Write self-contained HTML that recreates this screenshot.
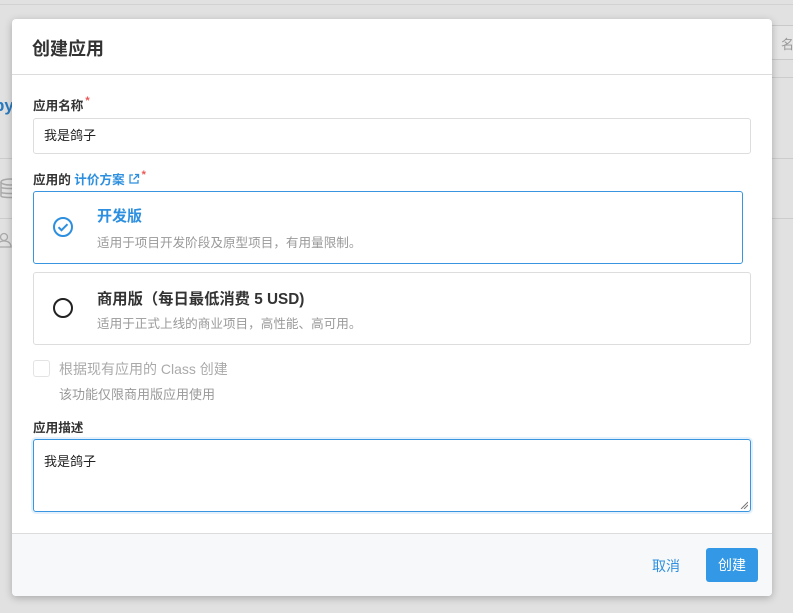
<!DOCTYPE html>
<html><head><meta charset="utf-8"><style>
*{box-sizing:border-box;margin:0;padding:0}
body{width:793px;height:613px;background:#e1e1e1;font-family:"Liberation Sans","Noto Sans CJK SC",sans-serif;position:relative;overflow:hidden;color:#333}
.abs{position:absolute}
.modal{left:12px;top:19px;width:760px;height:577px;background:#fff;border-radius:4px;box-shadow:0 2px 8px rgba(0,0,0,.25);overflow:hidden}
.hd{height:56px;border-bottom:1px solid #dcdcdc;padding:16px 20px;font-size:18px;font-weight:bold;color:#333}
.lbl{font-size:12.6px;font-weight:bold;color:#333}
.star{color:#e55;font-size:11px;vertical-align:top;margin-left:2px}
.inp{border:1px solid #ddd;border-radius:3px;font-size:13px;padding:0 10px;color:#222}
.card{border:1px solid #ddd;border-radius:3px}
.ft{left:0;top:514px;width:760px;height:63px;background:#f7f8fa;border-top:1px solid #dcdcdc}
</style></head><body>
<div class="abs" style="left:0;top:4px;width:793px;height:1px;background:#d2d2d2"></div>
<div class="abs" style="left:770px;top:25px;width:30px;height:35px;border:1px solid #c9c9c9;border-radius:3px;background:#e4e4e4;font-size:13px;color:#999;padding:8px 0 0 10px">名</div>
<div class="abs" style="left:0;top:96px;font-size:17px;font-weight:bold;color:#2a7ac0;margin-left:-6px">py</div>
<svg class="abs" style="left:0;top:178px" width="12" height="22"><ellipse cx="10" cy="4" rx="9" ry="3" fill="none" stroke="#aaa" stroke-width="1.5"/><path d="M1 4v14M1 9c0 2 18 2 18 0M1 14c0 2 18 2 18 0M1 18c0 2 18 2 18 0" fill="none" stroke="#aaa" stroke-width="1.5"/></svg>
<svg class="abs" style="left:0;top:232px" width="12" height="16"><circle cx="4" cy="5" r="3.5" fill="none" stroke="#aaa" stroke-width="1.3"/><path d="M-3 15c0-4 3-6 7-6s7 2 7 6z" fill="none" stroke="#aaa" stroke-width="1.3"/></svg>
<div class="abs" style="left:0;top:158px;width:12px;height:1px;background:#ccc"></div>
<div class="abs" style="left:0;top:218px;width:12px;height:1px;background:#ccc"></div>
<div class="abs" style="left:772px;top:77px;width:21px;height:1px;background:#ccc"></div>
<div class="abs" style="left:772px;top:158px;width:21px;height:1px;background:#ccc"></div>
<div class="abs" style="left:772px;top:218px;width:21px;height:1px;background:#ccc"></div>

<div class="abs modal">
<div class="hd">创建应用</div>
<div class="abs lbl" style="left:21px;top:76px">应用名称<span class="star">*</span></div>
<div class="abs inp" style="left:21px;top:99px;width:718px;height:36px;line-height:34px">我是鸽子</div>
<div class="abs lbl" style="left:21px;top:150px">应用的 <span style="color:#2d8fdf">计价方案</span><svg width="12" height="12" viewBox="0 0 12 12" style="margin-left:3px;vertical-align:-1px"><path d="M5 2H2v8h8V7M7 1.5h3.5V5M10.5 1.5L5.5 6.5" fill="none" stroke="#2d8fdf" stroke-width="1.3"/></svg><span class="star">*</span></div>
<div class="abs card" style="left:21px;top:172px;width:710px;height:73px;border-color:#3a95e0">
<svg class="abs" style="left:18px;top:24px" width="22" height="22" viewBox="0 0 22 22"><circle cx="11" cy="11" r="9" fill="none" stroke="#2d8fdf" stroke-width="2"/><path d="M6.5 11.2l3 3 6-6" fill="none" stroke="#2d8fdf" stroke-width="2"/></svg>
<div class="abs" style="left:63px;top:13px;font-size:15px;font-weight:bold;color:#2d8fdf">开发版</div>
<div class="abs" style="left:63px;top:40px;font-size:12.6px;color:#999">适用于项目开发阶段及原型项目，有用量限制。</div>
</div>
<div class="abs card" style="left:21px;top:253px;width:718px;height:73px">
<svg class="abs" style="left:18px;top:24px" width="22" height="22" viewBox="0 0 22 22"><circle cx="11" cy="11" r="9" fill="none" stroke="#222" stroke-width="2"/></svg>
<div class="abs" style="left:63px;top:14px;font-size:15.3px;font-weight:bold;color:#333">商用版（每日最低消费 5 USD)</div>
<div class="abs" style="left:63px;top:40px;font-size:12.6px;color:#999">适用于正式上线的商业项目，高性能、高可用。</div>
</div>
<div class="abs" style="left:21px;top:341px;width:17px;height:17px;border:1px solid #e3e3e3;border-radius:3px"></div>
<div class="abs" style="left:47px;top:340px;font-size:14px;color:#aaa">根据现有应用的 Class 创建</div>
<div class="abs" style="left:47px;top:365px;font-size:13px;color:#999">该功能仅限商用版应用使用</div>
<div class="abs lbl" style="left:21px;top:398px">应用描述</div>
<div class="abs inp" style="left:21px;top:420px;width:718px;height:73px;border-color:#3a95e0;box-shadow:0 0 0 2px #e4f1fc;padding-top:11px">我是鸽子
<svg class="abs" style="right:2px;bottom:2px" width="8" height="8"><path d="M1 8L8 1M4 8L8 4" stroke="#777" stroke-width="1"/></svg></div>
<div class="abs ft">
<div class="abs" style="left:640px;top:22px;font-size:14px;color:#2d8fdf">取消</div>
<div class="abs" style="left:694px;top:14px;width:52px;height:34px;background:#3399e6;border-radius:3px;color:#fff;font-size:14px;text-align:center;line-height:35px">创建</div>
</div>
</div>
</body></html>
